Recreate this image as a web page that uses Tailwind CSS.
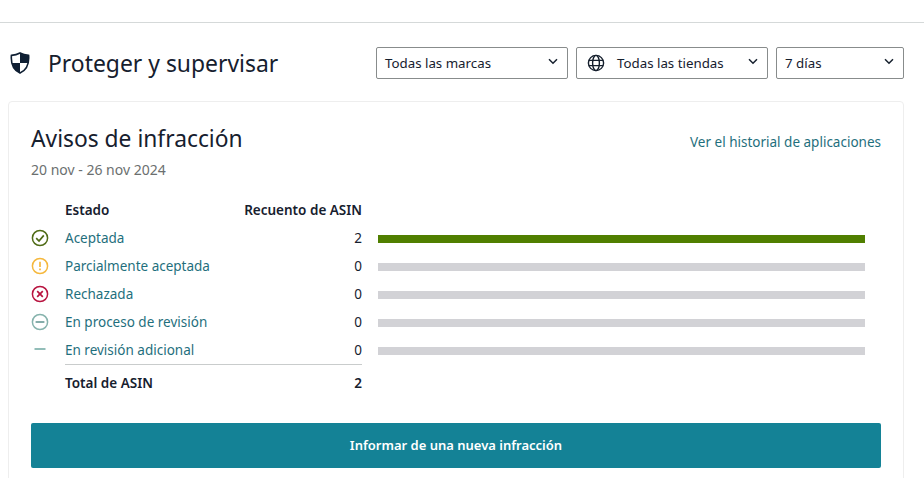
<!DOCTYPE html>
<html lang="en">

<head>
    <meta charset="UTF-8">
    <meta name="viewport" content="width=device-width, initial-scale=1.0">
    <title>Proteger y supervisar</title>
    <script src="https://cdn.jsdelivr.net/npm/@tailwindcss/browser@4"></script>
</head>

<body class="bg-white h-[478px] overflow-hidden font-['Noto_Sans',sans-serif] text-[#0f1111]">
    <div class="h-[23px] border-b border-[#d5d9d9]"></div>

    <!-- header -->
    <div class="flex items-center h-[78px] pl-[10px] pr-[20px]">
        <svg class="w-[20px] h-[22px] shrink-0 mt-[2px]" viewBox="0 0 20 22">
            <path d="M10 1 C12.5 2.4 15.5 3.2 18.6 3.4 C19.2 11 17.5 17.6 10 21 C2.5 17.6 0.8 11 1.4 3.4 C4.5 3.2 7.5 2.4 10 1 Z" fill="#fff" stroke="#0f1f33" stroke-width="1.6"/>
            <path d="M10 1 C12.5 2.4 15.5 3.2 18.6 3.4 C18.8 6.5 18.7 8.8 18.2 11 L10 11 Z M10 11 L1.8 11 C2.8 15.2 5.2 18.8 10 21 Z" fill="#0f1f33"/>
        </svg>
        <h1 class="ml-[18px] text-[22.9px] leading-none text-[#16202e] mt-[5px]">Proteger y supervisar</h1>
        <div class="ml-auto flex gap-[8px] mt-[1px]">
            <div class="w-[192px] h-[32px] flex items-center justify-between border border-[#888c8c] rounded-[2px] pl-[8px] pr-[9px] text-[13.3px] text-[#16202e]">
                <span class="mt-[3px]">Todas las marcas</span>
                <svg class="w-[10px] h-[7px] -mt-[2px]" viewBox="0 0 10 7" fill="none" stroke="#16202e" stroke-width="1.5"><path d="M1 1.2 L5 5.2 L9 1.2"/></svg>
            </div>
            <div class="w-[192px] h-[32px] flex items-center border border-[#888c8c] rounded-[2px] pl-[10px] pr-[9px] text-[13.3px] text-[#16202e]">
                <svg class="w-[18px] h-[18px]" viewBox="0 0 18 18" fill="none" stroke="#16202e" stroke-width="1.4">
                    <circle cx="9" cy="9" r="7.6"/>
                    <ellipse cx="9" cy="9" rx="3.4" ry="7.6"/>
                    <path d="M1.8 6.4 H16.2 M1.8 11.6 H16.2"/>
                </svg>
                <span class="ml-[12px] mt-[3px]">Todas las tiendas</span>
                <svg class="ml-auto w-[10px] h-[7px] -mt-[2px]" viewBox="0 0 10 7" fill="none" stroke="#16202e" stroke-width="1.5"><path d="M1 1.2 L5 5.2 L9 1.2"/></svg>
            </div>
            <div class="w-[128px] h-[32px] flex items-center justify-between border border-[#888c8c] rounded-[2px] pl-[8px] pr-[9px] text-[13.3px] text-[#16202e]">
                <span class="mt-[3px]">7 días</span>
                <svg class="w-[10px] h-[7px] -mt-[2px]" viewBox="0 0 10 7" fill="none" stroke="#16202e" stroke-width="1.5"><path d="M1 1.2 L5 5.2 L9 1.2"/></svg>
            </div>
        </div>
    </div>

    <!-- card -->
    <div class="mx-[8px] w-[896px] h-[400px] border border-[#eeeeee] rounded-[4px] px-[22px]">
        <div class="flex justify-between items-start pt-[22px]">
            <div>
                <h2 class="text-[22.8px] leading-[30px] text-[#16202e]">Avisos de infracción</h2>
                <p class="mt-[7px] text-[14px] leading-[18px] text-[#6b6f6f]">20 nov - 26 nov 2024</p>
            </div>
            <a class="mt-[9px] text-[13.5px] leading-[18px] text-[#1f6f7d]">Ver el historial de aplicaciones</a>
        </div>

        <div class="mt-[17px] text-[13.5px]">
            <div class="flex items-center h-[28px] font-semibold text-[#16202e]">
                <span class="ml-[34px]">Estado</span>
                <span class="ml-auto w-[200px] mr-[519px] text-right">Recuento de ASIN</span>
            </div>

            <div class="flex items-center h-[28px]">
                <svg class="w-[18px] h-[18px] shrink-0 -mt-[1px]" viewBox="0 0 18 18" fill="none" stroke="#4f6b16" stroke-width="1.5"><circle cx="9" cy="9" r="7.6"/><path d="M5.2 9.2 L8 12 L12.8 6.4" stroke-width="1.7"/></svg>
                <a class="ml-[16px] text-[#1f6f7d]">Aceptada</a>
                <span class="ml-auto text-[#16202e]">2</span>
                <div class="ml-[16px] mr-[16px] w-[487px] h-[8px] bg-[#507f00] mt-[1px]"></div>
            </div>
            <div class="flex items-center h-[28px]">
                <svg class="w-[18px] h-[18px] shrink-0 -mt-[1px]" viewBox="0 0 18 18" fill="none" stroke="#f5b83d" stroke-width="1.5"><circle cx="9" cy="9" r="7.6"/><path d="M9 4.8 V10" stroke-width="1.7"/><path d="M9 11.6 V13.2" stroke-width="1.7"/></svg>
                <a class="ml-[16px] text-[#1f6f7d]">Parcialmente aceptada</a>
                <span class="ml-auto text-[#16202e]">0</span>
                <div class="ml-[16px] mr-[16px] w-[487px] h-[8px] bg-[#d2d2d6] mt-[1px]"></div>
            </div>
            <div class="flex items-center h-[28px]">
                <svg class="w-[18px] h-[18px] shrink-0 -mt-[1px]" viewBox="0 0 18 18" fill="none" stroke="#b8133f" stroke-width="1.5"><circle cx="9" cy="9" r="7.6"/><path d="M6.2 6.2 L11.8 11.8 M11.8 6.2 L6.2 11.8" stroke-width="1.7"/></svg>
                <a class="ml-[16px] text-[#1f6f7d]">Rechazada</a>
                <span class="ml-auto text-[#16202e]">0</span>
                <div class="ml-[16px] mr-[16px] w-[487px] h-[8px] bg-[#d2d2d6] mt-[1px]"></div>
            </div>
            <div class="flex items-center h-[28px]">
                <svg class="w-[18px] h-[18px] shrink-0 -mt-[1px]" viewBox="0 0 18 18" fill="none" stroke="#86b3ad" stroke-width="1.5"><circle cx="9" cy="9" r="7.6"/><path d="M4.6 9 H13.4" stroke="#6f9f9b" stroke-width="1.7"/></svg>
                <a class="ml-[16px] text-[#1f6f7d]">En proceso de revisión</a>
                <span class="ml-auto text-[#16202e]">0</span>
                <div class="ml-[16px] mr-[16px] w-[487px] h-[8px] bg-[#d2d2d6] mt-[1px]"></div>
            </div>
            <div class="flex items-center h-[28px]">
                <svg class="w-[18px] h-[18px] shrink-0" viewBox="0 0 18 18" fill="none" stroke="#7fb2ac" stroke-width="1.7"><path d="M3.5 8 H14.5"/></svg>
                <a class="ml-[16px] text-[#1f6f7d]">En revisión adicional</a>
                <span class="ml-auto text-[#16202e]">0</span>
                <div class="ml-[16px] mr-[16px] w-[487px] h-[8px] bg-[#d2d2d6] mt-[1px]"></div>
            </div>

            <div class="ml-[34px] w-[297px] h-[37px] flex items-center justify-between border-t border-[#c9cccc] font-semibold text-[#16202e]">
                <span>Total de ASIN</span>
                <span>2</span>
            </div>
        </div>

        <button class="mt-[22px] w-full h-[45px] bg-[#148296] rounded-[2px] text-white text-[13px] font-semibold">Informar de una nueva infracción</button>
    </div>
</body>

</html>
